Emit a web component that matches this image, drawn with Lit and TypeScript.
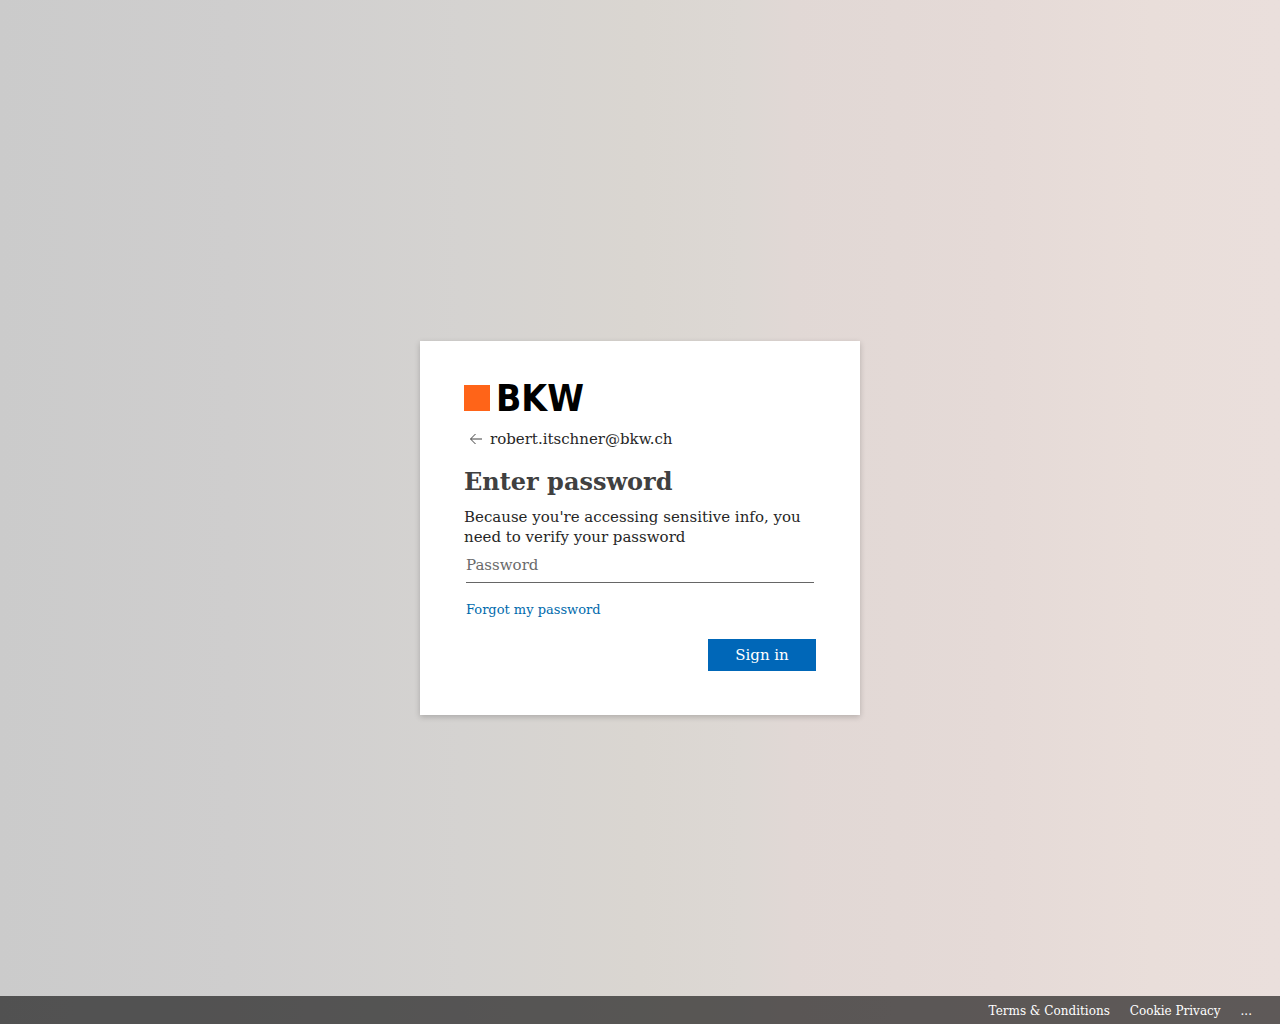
import { LitElement, html, css } from "lit";
import { customElement } from "lit/decorators.js";

@customElement("brand-logo")
export class BrandLogo extends LitElement {
  static styles = css`
    :host {
      display: flex;
      align-items: flex-start;
      gap: 6px;
      height: 26px;
    }
    .mark {
      width: 26px;
      height: 26px;
      background: #ff6418;
    }
    .name {
      color: #000;
      font: 700 37px/28px "DejaVu Sans Condensed", Inter, sans-serif;
    }
  `;

  render() {
    return html`<span class="mark"></span><span class="name">BKW</span>`;
  }
}

@customElement("sign-in-card")
export class SignInCard extends LitElement {
  static styles = css`
    :host {
      display: block;
      box-sizing: border-box;
      width: 100%;
      max-width: 440px;
      padding: 44px;
      background: #fff;
      box-shadow: 0 2px 6px rgba(0, 0, 0, 0.2);
      color: #262626;
      font-size: 15px;
      line-height: 20px;
    }
    .identity {
      display: flex;
      align-items: center;
      gap: 2px;
      margin-top: 16px;
    }
    .back {
      display: flex;
      padding: 0;
      border: 0;
      background: none;
      cursor: pointer;
    }
    .title {
      margin: 16px 0 10px;
      color: #404040;
      font-size: 24px;
      font-weight: 700;
      line-height: 30px;
    }
    .description {
      margin: 0;
    }
    .field {
      padding: 0 2px;
    }
    .password {
      display: block;
      box-sizing: border-box;
      width: 100%;
      height: 36px;
      padding: 0;
      border: 0;
      border-bottom: 1px solid #666;
      border-radius: 0;
      outline: none;
      background: none;
      color: inherit;
      font: inherit;
    }
    .password::placeholder {
      color: #6a6a6a;
      opacity: 1;
    }
    .password:focus {
      border-color: #0067b8;
    }
    .help {
      margin: 16px 2px 18px;
      font-size: 13px;
      line-height: 22px;
    }
    .link {
      color: #006aac;
      text-decoration: none;
    }
    .link:hover {
      text-decoration: underline;
    }
    .actions {
      display: flex;
      justify-content: flex-end;
    }
    .submit {
      min-width: 108px;
      height: 32px;
      padding: 0 12px;
      border: 0;
      background: #0067b8;
      color: #fff;
      font: inherit;
      cursor: pointer;
    }
  `;

  private submit(event: Event) {
    event.preventDefault();
  }

  render() {
    return html`
      <brand-logo></brand-logo>
      <div class="identity">
        <button class="back" type="button" aria-label="Back">
          <svg width="24" height="24" viewBox="0 0 24 24" fill="none" stroke="#404040" stroke-width="1">
            <path d="M18 12H6.7M11.5 7l-5 5 5 5" />
          </svg>
        </button>
        <span>robert.itschner@bkw.ch</span>
      </div>
      <form @submit=${this.submit}>
        <h1 class="title">Enter password</h1>
        <p class="description">
          Because you're accessing sensitive info, you need to verify your password
        </p>
        <div class="field">
          <input class="password" type="password" placeholder="Password" aria-label="Password" />
        </div>
        <p class="help"><a class="link" href="#">Forgot my password</a></p>
        <div class="actions">
          <button class="submit" type="submit">Sign in</button>
        </div>
      </form>
    `;
  }
}

@customElement("app-root")
export class AppRoot extends LitElement {
  static styles = css`
    :host {
      display: flex;
      flex-direction: column;
      min-height: 100vh;
      background: linear-gradient(to right, #cbcbcb, #cfcece 18%, #d5d3d1 36%, #dad6d1 50%, #ddd8d4 58%, #e1d8d5 62%, #e5dad7 78%, #e9deda 90%, #eadfdc);
      font-family: "DejaVu Serif", serif;
    }
    .main {
      display: flex;
      flex: 1;
      align-items: center;
      justify-content: center;
      padding-top: 60px;
    }
    .footer {
      display: flex;
      justify-content: flex-end;
      gap: 20px;
      padding: 2px 28px 0;
      background: rgba(0, 0, 0, 0.6);
      font-size: 12px;
      line-height: 26px;
    }
    .footer-link {
      color: #fff;
      text-decoration: none;
    }
  `;

  render() {
    return html`
      <main class="main"><sign-in-card></sign-in-card></main>
      <footer class="footer">
        <a class="footer-link" href="#">Terms &amp; Conditions</a>
        <a class="footer-link" href="#">Cookie Privacy</a>
        <a class="footer-link" href="#" aria-label="More options">...</a>
      </footer>
    `;
  }
}
